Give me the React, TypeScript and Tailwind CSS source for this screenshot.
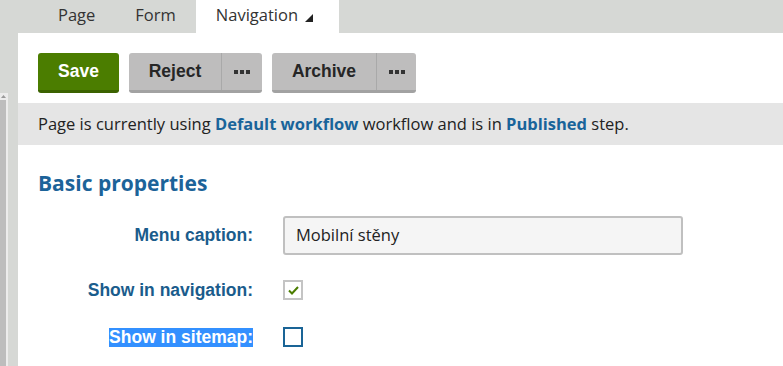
import React from 'react';

const tabs = [
  { label: 'Page', active: false },
  { label: 'Form', active: false },
  { label: 'Navigation', active: true },
];

function Dots() {
  return (
    <span className="flex gap-[2px]">
      <span className="w-[4px] h-[4px] bg-[#333]" />
      <span className="w-[4px] h-[4px] bg-[#333]" />
      <span className="w-[4px] h-[4px] bg-[#333]" />
    </span>
  );
}

function SplitButton({ label, mainW, dotsW }: { label: string; mainW: string; dotsW: string }) {
  return (
    <div className="flex h-[40px] rounded-[3px] bg-[#bebdbd] border-b-[3px] border-[#a2a2a2] text-[#262626]">
      <button className={`${mainW} h-full flex items-center justify-center font-bold border-r border-[#a9a9a9]`}>
        {label}
      </button>
      <button className={`${dotsW} h-full flex items-center justify-center`}>
        <Dots />
      </button>
    </div>
  );
}

export default function App(): React.ReactElement {
  return (
    <div className="w-[783px] h-[366px] overflow-hidden bg-white flex flex-col font-['Open_Sans',sans-serif]">
      {/* Tabs */}
      <header className="h-[33px] shrink-0 bg-[#d6d8d5] flex pl-[38px] text-[16.5px] text-[#333]">
        {tabs.map((tab) => (
          <div
            key={tab.label}
            className={`h-full flex items-center pb-[3px] ${tab.active ? 'bg-white pl-[20px] pr-[26px]' : 'px-[20px]'}`}
          >
            {tab.label}
            {tab.active && (
              <svg width="8" height="8" viewBox="0 0 8 8" className="ml-[7px] mt-[5px]">
                <path d="M8 0 L8 8 L0 8 Z" fill="#222" />
              </svg>
            )}
          </div>
        ))}
      </header>

      <div className="flex flex-1 min-h-0">
        {/* Left scroll strip */}
        <aside className="w-[18px] shrink-0 bg-[#d6d8d5] flex pt-[60px]">
          <div className="w-[8px] bg-[#ececec] flex flex-col">
            <div className="h-[7px] w-[6px] flex items-center justify-center">
              <svg width="5" height="3" viewBox="0 0 5 3">
                <path d="M0 3 L2.5 0 L5 3 Z" fill="#999" />
              </svg>
            </div>
            <div className="flex-1 w-[6px] bg-[#bdbdbd]" />
          </div>
        </aside>

        {/* Main content */}
        <main className="flex-1 flex flex-col pt-[20px]">
          <div className="flex gap-[10px] px-[20px] font-['Liberation_Sans',sans-serif] text-[17.5px]">
            <button className="w-[81px] h-[40px] rounded-[3px] bg-[#4b7d00] border-b-[3px] border-[#3b6200] text-white font-bold">
              Save
            </button>
            <SplitButton label="Reject" mainW="w-[93px]" dotsW="w-[40px]" />
            <SplitButton label="Archive" mainW="w-[105px]" dotsW="w-[39px]" />
          </div>

          <div className="mt-[10px] h-[42px] bg-[#e5e5e5] flex items-center px-[20px] text-[16.5px] text-[#222]">
            <span>
              Page is currently using <span className="font-bold text-[#19649a]">Default workflow</span> workflow
              and is in <span className="font-bold text-[#19649a]">Published</span> step.
            </span>
          </div>

          <h2 className="mt-[25px] px-[20px] text-[21px] leading-[26px] font-bold text-[#1c6399]">Basic properties</h2>

          <div className="mt-[20px] px-[20px] flex flex-col font-['Liberation_Sans',sans-serif] text-[17.5px] font-bold text-[#1a5c8c]">
            <div className="flex items-center h-[39px]">
              <label className="w-[215px] text-right">Menu caption:</label>
              <div className="ml-[30px] w-[400px] h-[39px] rounded-[3px] border-2 border-[#c0c0c0] bg-[#f5f5f5] flex items-center px-[11px] font-['Open_Sans',sans-serif] font-normal text-[16.5px] text-[#222]">
                Mobilní stěny
              </div>
            </div>

            <div className="flex items-center h-[20px] mt-[25px]">
              <label className="w-[215px] text-right">Show in navigation:</label>
              <div className="ml-[30px] w-[20px] h-[20px] border-2 border-[#c4c4c4] bg-white flex items-center justify-center">
                <svg width="11" height="9" viewBox="0 0 11 9">
                  <path d="M1 4.5 L4 7.5 L10 1" stroke="#4b7d00" strokeWidth="2" fill="none" />
                </svg>
              </div>
            </div>

            <div className="flex items-center h-[20px] mt-[27px]">
              <div className="w-[215px] flex justify-end">
                <label className="bg-[#3390ff] text-white leading-[19px]">Show in sitemap:</label>
              </div>
              <div className="ml-[30px] w-[20px] h-[20px] border-2 border-[#1a6496] bg-white" />
            </div>
          </div>
        </main>
      </div>
    </div>
  );
}
